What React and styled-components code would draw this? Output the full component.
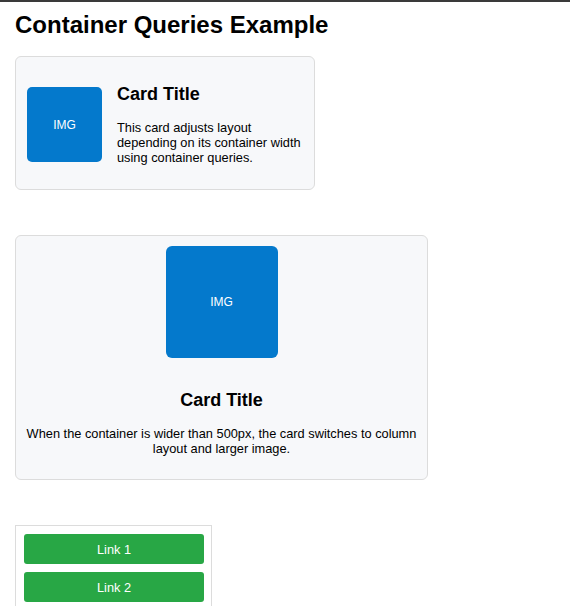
import styled, { createGlobalStyle } from "styled-components";

const GlobalStyle = createGlobalStyle`
  html, body {
    margin: 0;
    padding: 0;
    background: #ffffff;
  }
  body {
    border-top: 2px solid #3a3a3a;
    font-family: "Liberation Sans", Arial, sans-serif;
    color: #000000;
  }
  * {
    box-sizing: border-box;
  }
`;

const Page = styled.div`
  padding: 0 15px 20px 15px;
  display: flex;
  flex-direction: column;
  align-items: flex-start;
`;

const Heading = styled.h1`
  font-size: 24px;
  font-weight: bold;
  margin: 9px 0 17px 0;
`;

const Stack = styled.div`
  display: flex;
  flex-direction: column;
  align-items: flex-start;
  gap: 45px;
`;

const Card = styled.div`
  width: ${(props) => props.width}px;
  display: flex;
  flex-direction: ${(props) => (props.column ? "column" : "row")};
  align-items: center;
  gap: ${(props) => (props.column ? "32px" : "15px")};
  padding: ${(props) => (props.column ? "10px 6px 23px" : "27px 11px 24px")};
  background: #f7f8fa;
  border: 1px solid #dcdcdc;
  border-radius: 6px;
  text-align: ${(props) => (props.column ? "center" : "left")};
`;

const ImageBox = styled.div`
  flex: none;
  width: ${(props) => props.size}px;
  height: ${(props) => props.size}px;
  background: #0479cc;
  color: #ffffff;
  border-radius: ${(props) => (props.size > 100 ? "6px" : "5px")};
  display: flex;
  align-items: center;
  justify-content: center;
  font-size: 12px;
`;

const Body = styled.div`
  display: flex;
  flex-direction: column;
`;

const CardTitle = styled.h3`
  font-size: 18px;
  font-weight: bold;
  margin: 0 0 15px 0;
`;

const CardText = styled.p`
  font-size: 12.8px;
  margin: 0;
`;

const LinkList = styled.div`
  width: 197px;
  display: flex;
  flex-direction: column;
  gap: 8px;
  padding: 8px 7px 8px 8px;
  border: 1px solid #dcdcdc;
`;

const LinkButton = styled.a`
  height: 30px;
  display: flex;
  align-items: center;
  justify-content: center;
  background: #28a745;
  color: #ffffff;
  border-radius: 3px;
  font-size: 12.8px;
  text-decoration: none;
`;

export default function App() {
  return (
    <>
      <GlobalStyle />
      <Page>
        <Heading>Container Queries Example</Heading>
        <Stack>
          <Card width={300}>
            <ImageBox size={75}>IMG</ImageBox>
            <Body>
              <CardTitle>Card Title</CardTitle>
              <CardText>
                This card adjusts layout depending on its container width using container
                queries.
              </CardText>
            </Body>
          </Card>
          <Card width={413} column>
            <ImageBox size={112}>IMG</ImageBox>
            <Body>
              <CardTitle>Card Title</CardTitle>
              <CardText>
                When the container is wider than 500px, the card switches to column layout and
                larger image.
              </CardText>
            </Body>
          </Card>
          <LinkList>
            <LinkButton href="#">Link 1</LinkButton>
            <LinkButton href="#">Link 2</LinkButton>
            <LinkButton href="#">Link 3</LinkButton>
          </LinkList>
        </Stack>
      </Page>
    </>
  );
}
